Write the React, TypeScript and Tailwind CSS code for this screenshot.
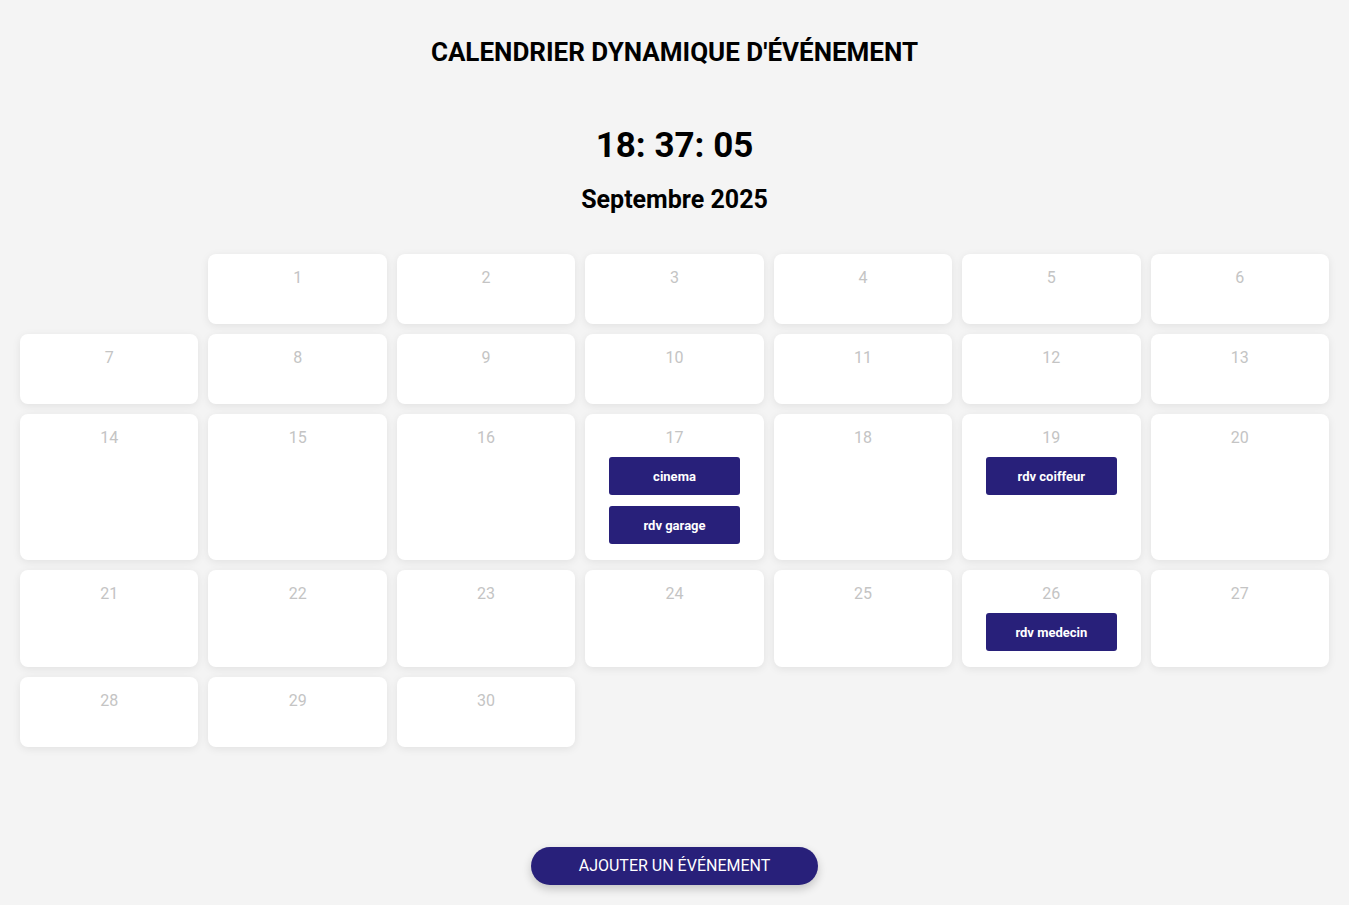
import React from "react";

const events: Record<number, string[]> = {
  17: ["cinema", "rdv garage"],
  19: ["rdv coiffeur"],
  26: ["rdv medecin"],
};

export default function App() {
  const cells: (number | null)[] = [null];
  for (let d = 1; d <= 30; d++) cells.push(d);
  return (
    <div className="min-h-[905px] bg-[#f4f4f4] font-['Roboto',sans-serif] text-black flex flex-col items-center">
      <h1 className="mt-[36px] text-[26px] leading-[32px] font-bold uppercase">Calendrier dynamique d'événement</h1>
      <div className="mt-[57px] text-[35px] leading-[42px] font-bold">18: 37: 05</div>
      <h2 className="mt-[17px] text-[25px] leading-[32px] font-bold">Septembre 2025</h2>
      <div className="mt-[38px] w-full px-[20px] grid grid-cols-7 gap-[10px]">
        {cells.map((d, i) =>
          d === null ? (
            <div key={i} />
          ) : (
            <div
              key={i}
              className="bg-white rounded-[8px] shadow-[0_2px_8px_rgba(0,0,0,0.08)] min-h-[70px] pt-[12px] pb-[16px] flex flex-col"
            >
              <div className="text-center text-[16px] leading-[24px] text-[#c4c4c4]">{d}</div>
              {events[d] && (
                <div className="mt-[7px] flex flex-col gap-[11px] mx-[24px]">
                  {events[d].map((e) => (
                    <div
                      key={e}
                      className="h-[38px] pt-[1px] rounded-[3px] bg-[#28207a] text-white text-[13px] font-bold flex items-center justify-center"
                    >
                      {e}
                    </div>
                  ))}
                </div>
              )}
            </div>
          )
        )}
      </div>
      <button className="mt-[100px] w-[287px] h-[38px] rounded-full bg-[#28207a] text-white text-[16px] uppercase shadow-[0_4px_10px_rgba(0,0,0,0.2)]">
        Ajouter un événement
      </button>
    </div>
  );
}
